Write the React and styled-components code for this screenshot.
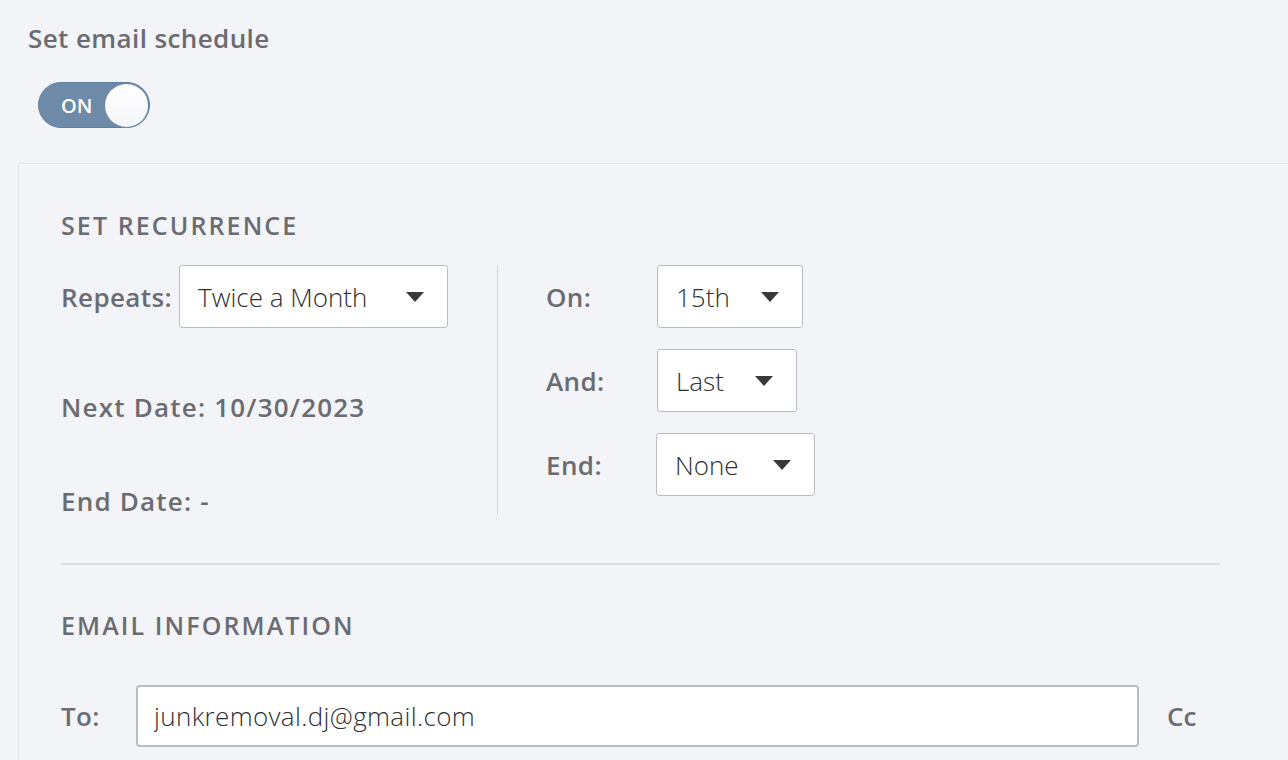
import React from 'react'
import styled, { createGlobalStyle } from 'styled-components'

const GlobalStyle = createGlobalStyle`
  html, body {
    margin: 0;
    padding: 0;
    background: #f3f4f8;
    overflow: hidden;
  }
  body {
    font-family: 'Open Sans', Lato, sans-serif;
    color: #6b6c72;
  }
`

const Page = styled.div`
  padding: 22px 0 0 28px;
  height: 760px;
  box-sizing: border-box;
`

const Title = styled.h1`
  margin: 0;
  font-size: 26px;
  line-height: 32px;
  font-weight: 600;
  letter-spacing: 0.4px;
  color: #6b6c72;
`

const Toggle = styled.button`
  display: flex;
  align-items: center;
  justify-content: space-between;
  box-sizing: border-box;
  width: 112px;
  height: 46px;
  margin: 28px 0 0 10px;
  padding: 0 1px 0 22px;
  border: 1px solid #5f7f9f;
  border-radius: 23px;
  background: #6d8aa9;
  color: #fff;
  font-family: inherit;
  font-size: 20px;
  font-weight: 600;
  cursor: pointer;
`

const Knob = styled.span`
  width: 43px;
  height: 43px;
  border-radius: 50%;
  background: linear-gradient(180deg, #ffffff 0%, #f4f5f8 100%);
  box-shadow: 0 0 0 1px #6d8aa9;
`

const Panel = styled.section`
  margin: 35px 0 0 -10px;
  padding: 45px 0 60px 42px;
  border-top: 1px solid #e1e6ee;
  border-left: 1px solid #e1e6ee;
`

const Inner = styled.div`
  width: 1159px;
`

const SectionTitle = styled.h2`
  margin: 0;
  font-size: 25px;
  line-height: 32px;
  font-weight: 600;
  letter-spacing: 2.1px;
  color: #6b6c72;
`

const Recurrence = styled.div`
  display: flex;
  margin-top: 24px;
`

const LeftCol = styled.div`
  width: 436px;
  height: 250px;
  border-right: 1px solid #d4d6da;
`

const Row = styled.div`
  display: flex;
  align-items: center;
`

const Label = styled.span`
  flex: none;
  width: ${p => (p.$width ? `${p.$width}px` : 'auto')};
  font-size: 26px;
  line-height: 32px;
  font-weight: 600;
  letter-spacing: 0.4px;
  color: #6b6c72;
`

const Info = styled.div`
  margin-top: ${p => p.$top}px;
  font-size: 26px;
  line-height: 32px;
  font-weight: 600;
  letter-spacing: 1.2px;
  color: #6b6c72;
`

const RightCol = styled.div`
  display: grid;
  grid-template-columns: 111px auto;
  grid-auto-rows: 63px;
  row-gap: 21px;
  align-items: center;
  align-content: start;
  padding-left: 48px;
`

const Select = styled.div`
  display: flex;
  align-items: center;
  justify-content: space-between;
  box-sizing: border-box;
  width: ${p => p.$width}px;
  height: 63px;
  margin-left: ${p => p.$shift || 0}px;
  padding: 0 23px 0 18px;
  background: #fff;
  border: 1px solid #b9bcc2;
  border-radius: 3px;
  font-size: 26px;
  color: #2f3033;
  font-weight: 300;
`

const Caret = styled.span`
  width: 0;
  height: 0;
  border-left: 9px solid transparent;
  border-right: 9px solid transparent;
  border-top: 10px solid #393a3d;
`

const Divider = styled.hr`
  margin: 48px 0 0;
  border: none;
  border-top: 2px solid #dcdde0;
`

const EmailTitle = styled(SectionTitle)`
  margin-top: 44px;
`

const EmailRow = styled(Row)`
  margin-top: 44px;
`

const Input = styled.input`
  box-sizing: border-box;
  width: 1003px;
  height: 62px;
  padding: 0 16px;
  background: #fff;
  border: 2px solid #b9bcc2;
  border-radius: 4px;
  font-family: inherit;
  font-size: 26px;
  font-weight: 300;
  letter-spacing: 0.35px;
  color: #2f3033;
  outline: none;
`

const Cc = styled.span`
  margin-left: 28px;
  font-size: 26px;
  font-weight: 600;
  color: #6b6c72;
`

const SelectBox = ({ value, width, shift }) => (
  <Select $width={width} $shift={shift}>
    <span>{value}</span>
    <Caret />
  </Select>
)

export default function App() {
  return (
    <Page>
      <GlobalStyle />
      <Title>Set email schedule</Title>
      <Toggle>
        ON
        <Knob />
      </Toggle>
      <Panel>
        <Inner>
          <SectionTitle>SET RECURRENCE</SectionTitle>
          <Recurrence>
            <LeftCol>
              <Row>
                <Label $width={118}>Repeats:</Label>
                <SelectBox value="Twice a Month" width={269} />
              </Row>
              <Info $top={63}>Next Date: 10/30/2023</Info>
              <Info $top={62}>End Date: -</Info>
            </LeftCol>
            <RightCol>
              <Label>On:</Label>
              <SelectBox value="15th" width={146} />
              <Label>And:</Label>
              <SelectBox value="Last" width={140} />
              <Label>End:</Label>
              <SelectBox value="None" width={159} shift={-1} />
            </RightCol>
          </Recurrence>
          <Divider />
          <EmailTitle>EMAIL INFORMATION</EmailTitle>
          <EmailRow>
            <Label $width={75}>To:</Label>
            <Input defaultValue="junkremoval.dj@gmail.com" />
            <Cc>Cc</Cc>
          </EmailRow>
        </Inner>
      </Panel>
    </Page>
  )
}
